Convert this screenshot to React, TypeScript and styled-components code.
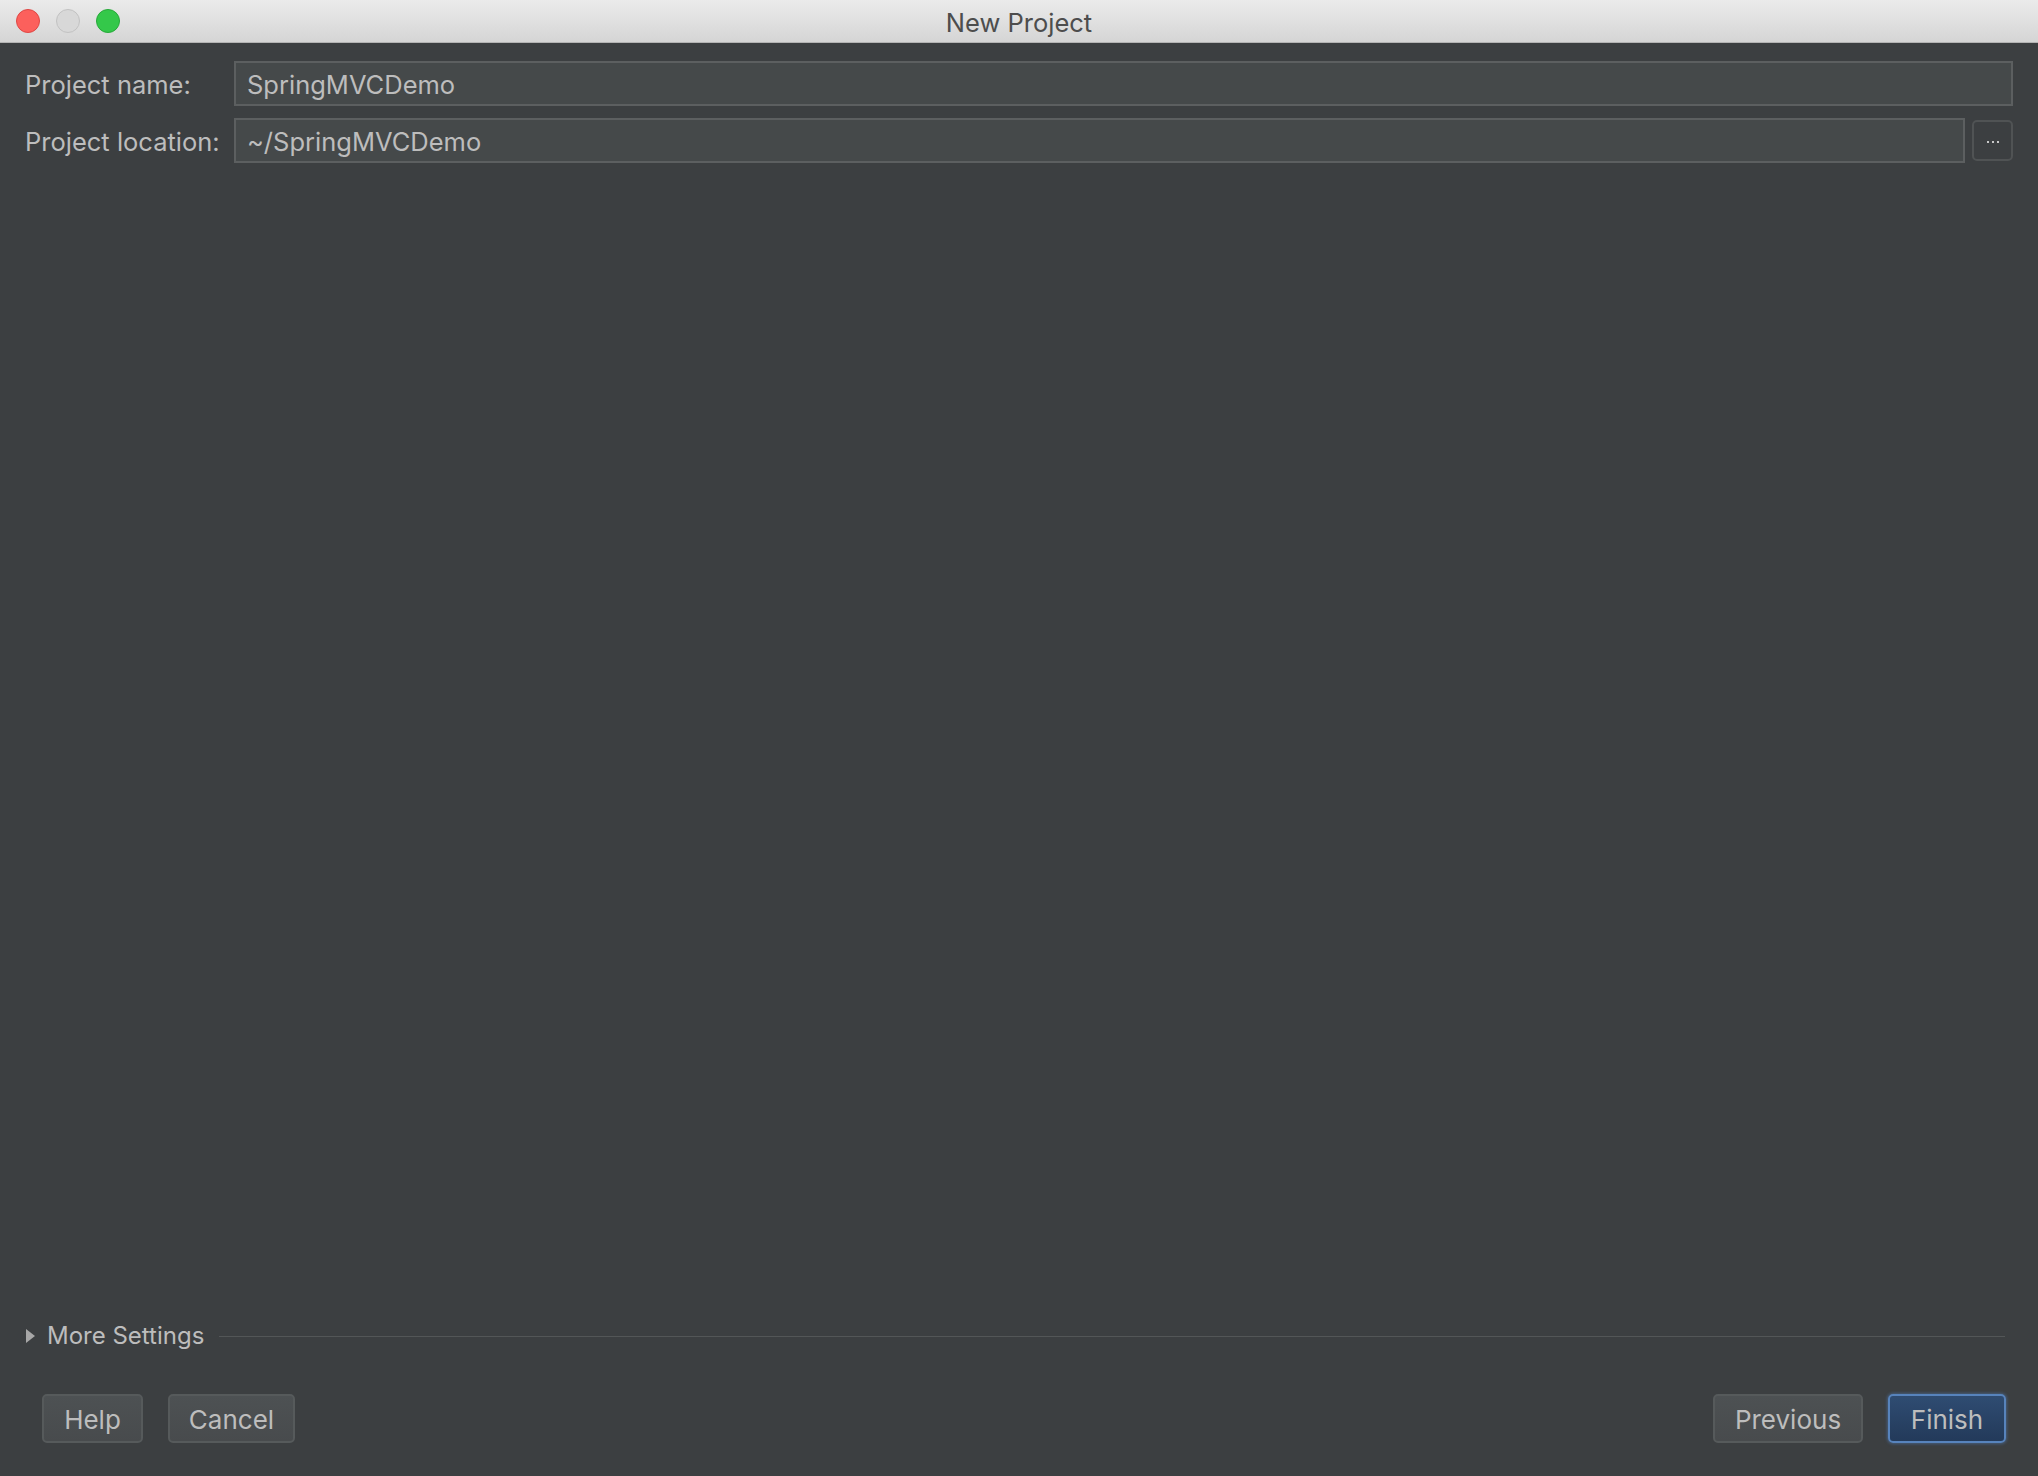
import React from 'react';
import styled, { createGlobalStyle } from 'styled-components';

const GlobalStyle = createGlobalStyle`
    html, body {
        margin: 0;
        padding: 0;
        background-color: #3c3f41;
    }
    body {
        font-family: Inter, "Open Sans", "Liberation Sans", sans-serif;
    }
`;

const Window = styled.div`
    display: flex;
    flex-direction: column;
    width: 2038px;
    height: 1476px;
    background-color: #3c3f41;
    overflow: hidden;
`;

const TitleBar = styled.div`
    display: grid;
    grid-template-columns: 200px 1fr 200px;
    align-items: center;
    height: 43px;
    box-sizing: border-box;
    background: linear-gradient(#ebebeb, #d5d5d5);
    border-bottom: 1px solid #b4b4b4;
`;

const Lights = styled.div`
    display: flex;
    gap: 16px;
    padding-left: 16px;
`;

const Light = styled.span<{ $fill: string; $edge: string }>`
    width: 24px;
    height: 24px;
    border-radius: 50%;
    box-sizing: border-box;
    background-color: ${(p) => p.$fill};
    border: 1px solid ${(p) => p.$edge};
`;

const Title = styled.div`
    text-align: center;
    font-size: 25.5px;
    color: #4d4d4d;
    padding-top: 2px;
`;

const Body = styled.div`
    flex: 1;
    display: flex;
    flex-direction: column;
    padding: 18px 25px 33px 25px;
`;

const Form = styled.div`
    display: grid;
    grid-template-columns: 200px 1fr;
    column-gap: 9px;
    row-gap: 12px;
    align-items: center;
`;

const Label = styled.label`
    font-size: 25.5px;
    color: #bdbdbd;
    white-space: nowrap;
    padding-top: 2px;
`;

const FieldRow = styled.div`
    display: flex;
    align-items: center;
    gap: 7px;
`;

const Field = styled.div`
    flex: 1;
    height: 45px;
    box-sizing: border-box;
    display: flex;
    align-items: center;
    padding: 2px 0 0 11px;
    background-color: #45494a;
    border: 2px solid #5c5f60;
    font-size: 25.5px;
    color: #bdbdbd;
`;

const BrowseButton = styled.button`
    width: 41px;
    height: 41px;
    box-sizing: border-box;
    border: 2px solid #505354;
    border-radius: 5px;
    background-color: #3c3f41;
    display: flex;
    align-items: center;
    justify-content: center;
    gap: 3px;
    padding: 0;
    padding-top: 2px;
`;

const Dot = styled.span`
    width: 2px;
    height: 2px;
    background-color: #c8c8c8;
`;

const Spacer = styled.div`
    flex: 1;
`;

const MoreRow = styled.div`
    display: flex;
    align-items: center;
    gap: 12px;
    padding-left: 1px;
    margin-right: 8px;
    margin-bottom: 44px;
`;

const Triangle = styled.span`
    width: 0;
    height: 0;
    border-top: 7px solid transparent;
    border-bottom: 7px solid transparent;
    border-left: 9px solid #a7a7a7;
`;

const MoreText = styled.span`
    font-size: 24px;
    color: #bdbdbd;
`;

const Rule = styled.div`
    flex: 1;
    height: 1px;
    margin-left: 3px;
    margin-top: 2px;
    background-color: #535657;
`;

const ButtonBar = styled.div`
    display: flex;
    align-items: center;
    padding: 0 7px 0 17px;
`;

const Group = styled.div`
    display: flex;
    gap: 25px;
`;

const Button = styled.button<{ $primary?: boolean; $width: number }>`
    width: ${(p) => p.$width}px;
    height: 49px;
    box-sizing: border-box;
    border-radius: 5px;
    font-family: inherit;
    font-size: 26px;
    color: #bdbdbd;
    padding: 2px 0 0 0;
    background: ${(p) =>
        p.$primary ? 'linear-gradient(#2f4c72, #233a5a)' : 'linear-gradient(#4d5153, #484b4d)'};
    border: ${(p) => (p.$primary ? '2px solid #5783bc' : '2px solid #565a5b')};
    box-shadow: ${(p) => (p.$primary ? '0 0 3px 1px rgba(80, 125, 185, 0.5)' : 'none')};
`;

const App: React.FC = () => {
    return (
        <Window>
            <GlobalStyle />
            <TitleBar>
                <Lights>
                    <Light $fill="#fc605c" $edge="#df4744" />
                    <Light $fill="#d8d8d8" $edge="#c2c2c2" />
                    <Light $fill="#34c84a" $edge="#27a93a" />
                </Lights>
                <Title>New Project</Title>
                <div />
            </TitleBar>
            <Body>
                <Form>
                    <Label>Project name:</Label>
                    <FieldRow>
                        <Field>SpringMVCDemo</Field>
                    </FieldRow>
                    <Label>Project location:</Label>
                    <FieldRow>
                        <Field>~/SpringMVCDemo</Field>
                        <BrowseButton type="button" aria-label="Browse">
                            <Dot />
                            <Dot />
                            <Dot />
                        </BrowseButton>
                    </FieldRow>
                </Form>
                <Spacer />
                <MoreRow>
                    <Triangle />
                    <MoreText>More Settings</MoreText>
                    <Rule />
                </MoreRow>
                <ButtonBar>
                    <Group>
                        <Button type="button" $width={101}>Help</Button>
                        <Button type="button" $width={127}>Cancel</Button>
                    </Group>
                    <Spacer />
                    <Group>
                        <Button type="button" $width={150}>Previous</Button>
                        <Button type="button" $width={118} $primary>Finish</Button>
                    </Group>
                </ButtonBar>
            </Body>
        </Window>
    );
};

export default App;
